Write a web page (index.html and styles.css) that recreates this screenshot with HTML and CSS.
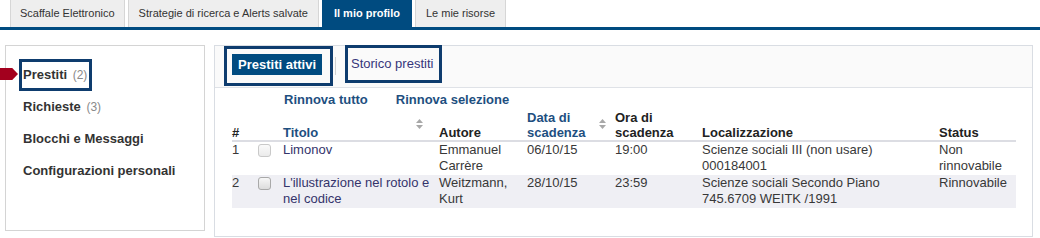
FILE: index.html
```html
<!DOCTYPE html>
<html lang="it">
<head>
<meta charset="utf-8">
<title>Il mio profilo</title>
<link rel="stylesheet" href="styles.css">
</head>
<body>
<div class="page">
  <nav class="tabs">
    <a class="tab">Scaffale Elettronico</a>
    <a class="tab tab--wide">Strategie di ricerca e Alerts salvate</a>
    <a class="tab tab--active">Il mio profilo</a>
    <a class="tab tab--wide">Le mie risorse</a>
  </nav>
  <div class="layout">
    <aside class="sidebar">
      <ul class="side-nav">
        <li class="side-item side-item--current"><span class="side-label">Prestiti</span> <span class="side-count">(2)</span></li>
        <li class="side-item"><span class="side-label">Richieste</span> <span class="side-count">(3)</span></li>
        <li class="side-item"><span class="side-label">Blocchi e Messaggi</span></li>
        <li class="side-item"><span class="side-label">Configurazioni personali</span></li>
      </ul>
    </aside>
    <main class="panel">
      <div class="subtabs">
        <div class="subtab subtab--active"><span class="subtab-label">Prestiti attivi</span></div>
        <span class="subtab-sep"></span>
        <div class="subtab subtab--focus">Storico prestiti</div>
      </div>
      <div class="panel-body">
        <div class="actions"><a class="action">Rinnova tutto</a><a class="action">Rinnova selezione</a></div>
        <table class="loans">
          <colgroup>
            <col class="c-num"><col class="c-cb"><col class="c-title"><col class="c-author"><col class="c-date"><col class="c-time"><col class="c-loc"><col class="c-status">
          </colgroup>
          <thead>
            <tr>
              <th>#</th>
              <th></th>
              <th class="sortable">Titolo<svg class="sort sort--title" width="7" height="10" viewBox="0 0 7 10"><path d="M0 4 L3.5 0 L7 4 Z M0 6 L3.5 10 L7 6 Z" fill="#a8a8a8"/></svg></th>
              <th>Autore</th>
              <th class="sortable">Data di scadenza<svg class="sort sort--date" width="7" height="10" viewBox="0 0 7 10"><path d="M0 4 L3.5 0 L7 4 Z M0 6 L3.5 10 L7 6 Z" fill="#a8a8a8"/></svg></th>
              <th>Ora di scadenza</th>
              <th>Localizzazione</th>
              <th>Status</th>
            </tr>
          </thead>
          <tbody>
            <tr>
              <td>1</td>
              <td><span class="cb cb--disabled"></span></td>
              <td class="title">Limonov</td>
              <td>Emmanuel Carrère</td>
              <td>06/10/15</td>
              <td>19:00</td>
              <td>Scienze sociali III (non usare)<br>000184001</td>
              <td>Non rinnovabile</td>
            </tr>
            <tr class="row--alt">
              <td>2</td>
              <td><span class="cb"></span></td>
              <td class="title">L'illustrazione nel rotolo e nel codice</td>
              <td>Weitzmann, Kurt</td>
              <td>28/10/15</td>
              <td>23:59</td>
              <td>Scienze sociali Secondo Piano<br>745.6709 WEITK /1991</td>
              <td>Rinnovabile</td>
            </tr>
          </tbody>
        </table>
      </div>
    </main>
  </div>
</div>
</body>
</html>
```

FILE: styles.css
```css
* { box-sizing: border-box; }
html, body { margin: 0; padding: 0; background: #fff; }
body {
  font-family: "Liberation Sans", Arial, sans-serif;
  font-size: 13px;
  color: #333;
}

/* top tabs */
.tabs {
  display: flex;
  gap: 3px;
  padding-left: 10px;
  height: 30px;
  border-bottom: 3px solid #004b80;
}
.tab {
  display: block;
  height: 27px;
  line-height: 26px;
  padding: 0 9px;
  font-size: 11px;
  color: #333;
  background: #eeeeee;
  border-left: 1px solid #d6d6d6;
  border-right: 1px solid #d6d6d6;
  white-space: nowrap;
}
.tab--wide {
  padding: 0 10px;
}
.tab--active {
  background: #004b80;
  border-color: #004b80;
  color: #fff;
  font-weight: bold;
  padding: 0 11px;
}

/* layout */
.layout {
  display: grid;
  grid-template-columns: 200px 1fr;
  gap: 9px;
  padding: 15px 7px 0 5px;
  align-items: start;
}

/* sidebar */
.sidebar {
  height: 186px;
  border: 1px solid #d4d4d4;
  padding: 13px 0 0 13px;
}
.side-nav {
  list-style: none;
  margin: 0;
  padding: 0;
  display: flex;
  flex-direction: column;
  align-items: flex-start;
}
.side-item {
  position: relative;
  border: 3px solid transparent;
  padding: 5px 2px 5px 1px;
  line-height: 16px;
  white-space: nowrap;
}
.side-label {
  font-weight: bold;
  color: #333;
}
.side-count {
  margin-left: 2px;
  font-size: 12px;
  color: #8a8a8a;
}
.side-item--current {
  border-color: #0e3c6e;
}
.side-item--current::before {
  content: "";
  position: absolute;
  left: -22px;
  top: 6px;
  width: 18px;
  height: 12px;
  background: #a3001e;
  clip-path: polygon(0 0, 68% 0, 100% 50%, 68% 100%, 0 100%);
}

/* main panel */
.panel {
  border: 1px solid #d9dde3;
  padding-bottom: 28px;
}
.subtabs {
  display: flex;
  align-items: flex-start;
  height: 42px;
  padding-left: 9px;
  background: #fafafa;
  border-bottom: 1px solid #dfe2e7;
}
.subtab {
  border: 3px solid #0e3c6e;
  font-size: 13px;
  white-space: nowrap;
}
.subtab--active {
  padding: 5px 8px 8px 5px;
  height: 40px;
}
.subtab-label {
  display: block;
  padding: 0 6px;
  line-height: 21px;
  background: #004b80;
  color: #fff;
  font-weight: bold;
}
.subtab-sep {
  width: 1px;
  height: 18px;
  margin: 11px 9px 0 2px;
  background: #d0d0d0;
}
.subtab--focus {
  margin-top: -1px;
  height: 38px;
  line-height: 32px;
  padding: 0 6px 0 3px;
  color: #36367a;
}

.panel-body {
  padding: 0 15px 0 17px;
}
.actions {
  display: flex;
  gap: 28px;
  margin-top: 4px;
  padding-left: 52px;
  line-height: 16px;
}
.action {
  font-weight: bold;
  color: #1e4f7f;
}

/* table */
.loans {
  width: 784px;
  table-layout: fixed;
  border-collapse: collapse;
  font-size: 13px;
}
.c-num { width: 25px; }
.c-cb { width: 26px; }
.c-title { width: 156px; }
.c-author { width: 88px; }
.c-date { width: 88px; }
.c-time { width: 87px; }
.c-loc { width: 237px; }
.c-status { width: 77px; }

.loans th {
  position: relative;
  text-align: left;
  vertical-align: bottom;
  font-weight: bold;
  line-height: 15px;
  padding: 2px 4px 0 0;
  color: #222;
  border-bottom: 2px solid #dcdde3;
}
.loans th.sortable { color: #1e4f7f; }
.sort {
  position: absolute;
  top: 50%;
  margin-top: -5px;
}
.sort--title { right: 16px; }
.sort--date { right: 9px; }

.loans td {
  vertical-align: top;
  line-height: 16px;
  padding: 0 4px 1px 0;
  color: #383838;
}
.loans td.title { color: #34346b; }
.row--alt td { background: #efeff4; }

.cb {
  display: inline-block;
  width: 13px;
  height: 13px;
  margin: 2px 0 0 1px;
  vertical-align: top;
  border: 1px solid #a9a9a9;
  border-radius: 3px;
  background: linear-gradient(#f7f7f7, #dcdcdc);
}
.cb--disabled {
  border-color: #c9c9c9;
  background: linear-gradient(#fafafa, #ebebeb);
}
```
